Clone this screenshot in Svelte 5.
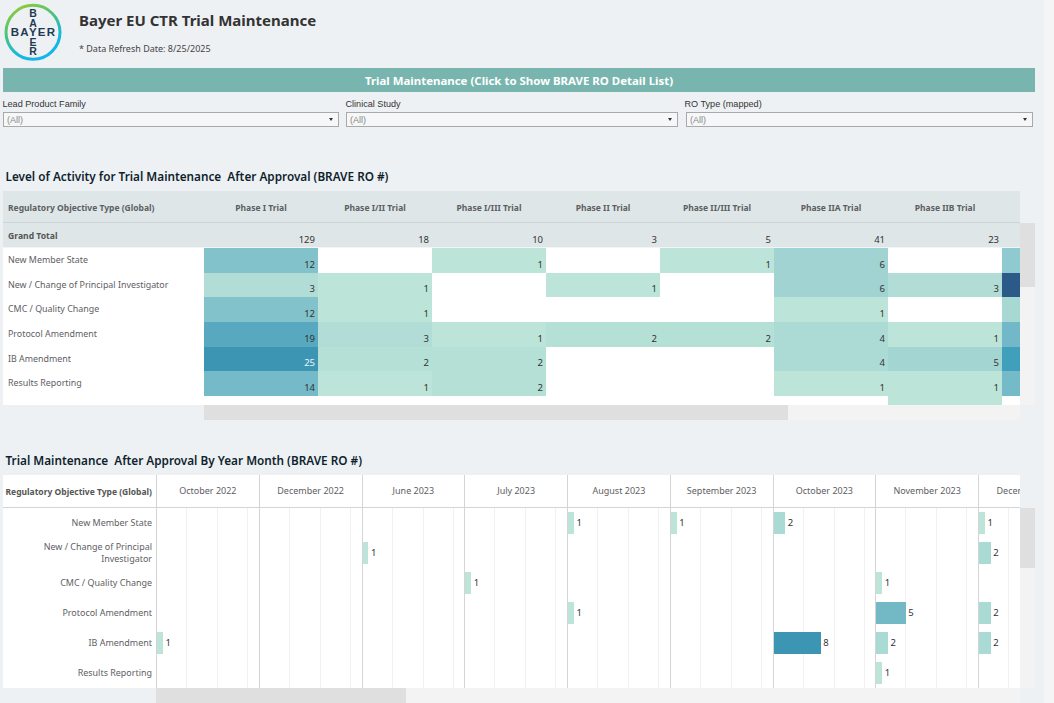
<script>
	const phases = ['Phase I Trial', 'Phase I/II Trial', 'Phase I/III Trial', 'Phase II Trial', 'Phase II/III Trial', 'Phase IIA Trial', 'Phase IIB Trial', ''];
	const totals = [129, 18, 10, 3, 5, 41, 23, ''];
	const heatColors = { 1: '#bce4d9', 2: '#b5e0d6', 3: '#b1ddd6', 4: '#acdad5', 5: '#a3d5d2', 6: '#a0d3d1', 12: '#81c2cb', 14: '#74bac8', 19: '#58a9c0', 25: '#3c95b3' };
	const heatRows = [
		{ name: 'New Member State', cells: [12, 0, 1, 0, 1, 6, 0], edge: '#8fcad0' },
		{ name: 'New / Change of Principal Investigator', cells: [3, 1, 0, 1, 0, 6, 3], edge: '#2c5a88' },
		{ name: 'CMC / Quality Change', cells: [12, 1, 0, 0, 0, 1, 0], edge: '#a8d8d2' },
		{ name: 'Protocol Amendment', cells: [19, 3, 1, 2, 2, 4, 1], edge: '#72b8c8' },
		{ name: 'IB Amendment', cells: [25, 2, 2, 0, 0, 4, 5], edge: '#409fba' },
		{ name: 'Results Reporting', cells: [14, 1, 2, 0, 0, 1, 1], edge: '#74bac8' }
	];

	const months = ['October 2022', 'December 2022', 'June 2023', 'July 2023', 'August 2023', 'September 2023', 'October 2023', 'November 2023', 'December 2023'];
	const barColors = { 1: '#bce4d9', 2: '#a9dad4', 5: '#72b8c5', 8: '#3c95b3' };
	const barRows = [
		{ name: 'New Member State', bars: [0, 0, 0, 0, 1, 1, 2, 0, 1] },
		{ name: 'New / Change of Principal Investigator', bars: [0, 0, 1, 0, 0, 0, 0, 0, 2] },
		{ name: 'CMC / Quality Change', bars: [0, 0, 0, 1, 0, 0, 0, 1, 0] },
		{ name: 'Protocol Amendment', bars: [0, 0, 0, 0, 1, 0, 0, 5, 2] },
		{ name: 'IB Amendment', bars: [1, 0, 0, 0, 0, 0, 8, 2, 2] },
		{ name: 'Results Reporting', bars: [0, 0, 0, 0, 0, 0, 0, 1, 0] }
	];
</script>

<div class="page">
	<header class="top">
		<svg class="logo" viewBox="0 0 58 58" width="58" height="58" aria-label="Bayer logo">
			<defs>
				<linearGradient id="ring" x1="0.25" y1="0" x2="0.7" y2="1">
					<stop offset="0" stop-color="#8ccb3c" />
					<stop offset="0.45" stop-color="#3fc08f" />
					<stop offset="0.75" stop-color="#14b8e0" />
					<stop offset="1" stop-color="#12b5ea" />
				</linearGradient>
			</defs>
			<circle cx="29" cy="29.3" r="27" fill="none" stroke="url(#ring)" stroke-width="3" />
			<g class="logo-text">
				<text x="29" y="14.2">B</text>
				<text x="29" y="23.6">A</text>
				<text x="29" y="42.6">E</text>
				<text x="29" y="52.2">R</text>
				<text x="29.6" y="33.2" class="wide">BAYER</text>
			</g>
		</svg>
		<div class="heading">
			<h1>Bayer EU CTR Trial Maintenance</h1>
			<p>* Data Refresh Date: 8/25/2025</p>
		</div>
	</header>

	<div class="band">Trial Maintenance (Click to Show BRAVE RO Detail List)</div>

	<div class="filters">
		{#each [['Lead Product Family', 336], ['Clinical Study', 332], ['RO Type (mapped)', 348]] as [label, w]}
			<div class="filter" style="width: {w}px">
				<span class="filter-label">{label}</span>
				<div class="select"><span>(All)</span><i></i></div>
			</div>
		{/each}
	</div>

	<h2 class="first">Level of Activity for Trial Maintenance &nbsp;After Approval (BRAVE RO #)</h2>

	<section class="heat-wrap">
		<div class="heat">
			<div class="hh first-col">Regulatory Objective Type (Global)</div>
			{#each phases as p}
				<div class="hh center">{p}</div>
			{/each}

			<div class="gt first-col">Grand Total</div>
			{#each totals as t}
				<div class="gt num">{t}</div>
			{/each}

			{#each heatRows as row}
				<div class="lbl first-col">{row.name}</div>
				{#each row.cells as v}
					<div class="cell" class:light={v === 25} style="background: {heatColors[v] ?? '#fff'}">{v || ''}</div>
				{/each}
				<div class="cell" style="background: {row.edge}"></div>
			{/each}

			<div class="tail"></div>
			<div class="tail"></div>
			<div class="tail"></div>
			<div class="tail"></div>
			<div class="tail"></div>
			<div class="tail"></div>
			<div class="tail"></div>
			<div class="tail spill"></div>
			<div class="tail"></div>
		</div>
		<div class="vscroll heat-v"><div class="thumb"></div></div>
	</section>
	<div class="hscroll heat-h"><div class="thumb"></div></div>

	<h2 class="second">Trial Maintenance &nbsp;After Approval By Year Month (BRAVE RO #)</h2>

	<section class="bars-wrap">
		<div class="bars">
			<div class="bh side">Regulatory Objective Type (Global)</div>
			{#each months as m}
				<div class="bh month-head"><span>{m}</span></div>
			{/each}

			{#each barRows as row}
				<div class="blabel">{row.name}</div>
				{#each row.bars as v}
					<div class="slot">
						{#if v}
							<span class="bar" style="width: {v * 5.9}px; background: {barColors[v]}"></span>
							<span class="val">{v}</span>
						{/if}
					</div>
				{/each}
			{/each}
		</div>
		<div class="vscroll bars-v"><div class="thumb"></div></div>
	</section>
	<div class="hscroll bars-h"><div class="thumb"></div></div>
</div>

<style>
	:global(body) {
		margin: 0;
		background: #f5f5f5;
	}

	.page {
		width: 1044px;
		height: 703px;
		overflow: hidden;
		background: #eef1f4;
		font-family: 'Noto Sans', sans-serif;
		color: #555;
	}

	.top {
		display: flex;
		height: 68px;
		box-sizing: border-box;
		padding: 3px 0 0 4px;
		gap: 17px;
	}

	.logo-text text {
		font-family: 'Liberation Sans', sans-serif;
		font-weight: 700;
		font-size: 10.5px;
		fill: #1f3b52;
		text-anchor: middle;
	}

	.logo-text text.wide {
		font-size: 11.5px;
		letter-spacing: 1.3px;
	}

	h1 {
		margin: 7px 0 0;
		font-size: 15px;
		line-height: 20px;
		font-weight: 700;
		color: #333;
	}

	.heading p {
		margin: 13px 0 0;
		font-size: 9px;
		line-height: 12px;
		color: #444;
	}

	.band {
		margin-left: 3px;
		width: 1032px;
		height: 24px;
		background: #78b5ae;
		color: #fff;
		font-size: 11.45px;
		font-weight: 700;
		line-height: 26px;
		text-align: center;
	}

	.filters {
		display: flex;
		gap: 7px;
		margin: 5px 0 0 3px;
		width: 1032px;
	}

	.filter:last-child .select {
		margin-left: 1px;
	}

	.filter-label {
		display: block;
		margin-left: -0.5px;
		font-family: 'Liberation Sans', sans-serif;
		font-size: 9.1px;
		line-height: 15px;
		color: #333;
	}

	.select {
		display: flex;
		align-items: center;
		justify-content: space-between;
		height: 15px;
		box-sizing: border-box;
		border: 1px solid #a9a9a9;
		background: #f5f7f9;
		padding: 0 5px 0 3px;
		font-family: 'Liberation Sans', sans-serif;
		font-size: 9px;
		color: #888;
	}

	.select i {
		width: 0;
		height: 0;
		border-left: 2.5px solid transparent;
		border-right: 2.5px solid transparent;
		border-top: 3px solid #333;
	}

	h2 {
		margin: 0 0 0 5.5px;
		font-size: 11.75px;
		line-height: 16px;
		font-weight: 600;
		color: #0f1f2e;
	}

	h2.first {
		padding-top: 41px;
		height: 23px;
	}

	h2.second {
		padding-top: 32px;
		height: 23px;
	}

	.heat-wrap,
	.bars-wrap {
		display: flex;
		margin-left: 3px;
		width: 1032px;
	}

	.heat {
		display: grid;
		grid-template-columns: 201px repeat(7, 114px) 19px;
		grid-template-rows: 32px 25px repeat(6, 24.67px) 9px;
		width: 1017px;
		overflow: hidden;
		background: #fff;
	}

	.first-col {
		padding-left: 5px;
	}

	.hh {
		display: flex;
		align-items: center;
		padding-top: 1px;
		box-sizing: border-box;
		background: #dfe6e8;
		border-bottom: 1px solid #cdd3d6;
		font-size: 8.5px;
		font-weight: 700;
		color: #5c5f62;
		white-space: nowrap;
		overflow: hidden;
	}

	.center {
		justify-content: center;
	}

	.gt {
		background: #dfe6e8;
		font-size: 8.6px;
		line-height: 27px;
		font-weight: 700;
		color: #555;
		border-bottom: 1px solid #f2f4f5;
		box-sizing: border-box;
	}

	.gt.num {
		padding: 9px 3px 0 0;
		font-size: 9.5px;
		line-height: 16px;
		font-weight: 400;
		text-align: right;
		color: #333;
	}

	.lbl {
		font-size: 8.9px;
		line-height: 24px;
		color: #5e6064;
		white-space: nowrap;
	}

	.cell {
		display: flex;
		align-items: flex-end;
		justify-content: flex-end;
		padding: 0 3px 1px 0;
		box-sizing: border-box;
		font-size: 9.5px;
		line-height: 14px;
		color: #333;
		overflow: hidden;
	}

	.cell.light {
		color: #e8f6f8;
	}

	.tail.spill {
		background: #bce4d9;
	}

	.vscroll {
		width: 15px;
		background: #f3f3f3;
	}

	.vscroll .thumb {
		background: #dfdfdf;
	}

	.heat-v {
		margin-top: 32px;
	}

	.heat-v .thumb {
		height: 64px;
	}

	.hscroll {
		height: 15px;
		background: #f3f3f3;
	}

	.hscroll .thumb {
		height: 15px;
		background: #dfdfdf;
	}

	.heat-h {
		margin-left: 204px;
		width: 816px;
	}

	.heat-h .thumb {
		width: 584px;
	}

	.bars {
		display: grid;
		grid-template-columns: 153px repeat(9, 102.75px);
		grid-template-rows: 33px repeat(6, 30px);
		width: 1017px;
		overflow: hidden;
		background: #fff;
	}

	.bh {
		border-bottom: 1px solid #d4d4d4;
		box-sizing: border-box;
		white-space: nowrap;
	}

	.bh.side {
		padding: 0 4px 0 0;
		font-size: 8.5px;
		font-weight: 700;
		line-height: 33px;
		text-align: right;
		color: #555;
	}

	.month-head {
		display: flex;
		align-items: center;
		justify-content: center;
		border-left: 1px solid #d4d4d4;
		font-size: 9px;
		color: #5e6064;
		overflow: hidden;
	}

	.blabel {
		display: flex;
		align-items: center;
		justify-content: flex-end;
		padding: 0 4px 0 20px;
		font-size: 8.95px;
		line-height: 12px;
		color: #5e6064;
		text-align: right;
	}

	.slot {
		display: flex;
		align-items: center;
		gap: 2.5px;
		box-sizing: border-box;
		border-left: 1px solid #d4d4d4;
		background-image:
			linear-gradient(#f1f1f1, #f1f1f1),
			linear-gradient(#f1f1f1, #f1f1f1),
			linear-gradient(#f1f1f1, #f1f1f1);
		background-size: 1px 100%;
		background-repeat: no-repeat;
		background-position: 29px 0, 60px 0, 90px 0;
	}

	.bar {
		display: block;
		height: 22px;
	}

	.val {
		font-size: 9.5px;
		color: #333;
	}

	.bars-v .thumb {
		height: 60px;
	}

	.bars-v {
		margin-top: 33px;
	}

	.bars-h {
		margin-left: 156px;
		width: 864px;
	}

	.bars-h .thumb {
		width: 250px;
	}
</style>
